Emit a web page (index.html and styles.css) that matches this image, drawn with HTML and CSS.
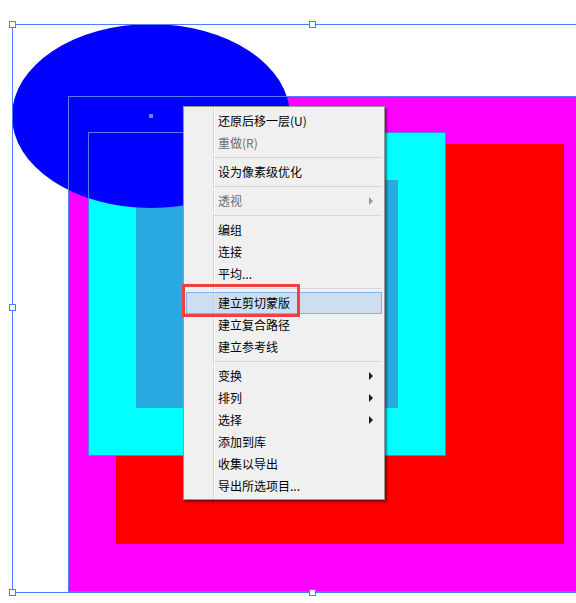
FILE: index.html
```html
<!DOCTYPE html>
<html lang="zh-CN">
<head>
<meta charset="utf-8">
<title>Context menu</title>
<link rel="stylesheet" href="styles.css">
</head>
<body>
<div class="canvas">
  <svg class="art" width="576" height="603" viewBox="0 0 576 603" shape-rendering="crispEdges">
    <rect x="68" y="96" width="520" height="496" fill="#ff00ff"/>
    <rect x="116" y="144" width="448" height="400" fill="#ff0000"/>
    <rect x="88" y="132" width="358" height="324" fill="#00ffff"/>
    <rect x="136" y="180" width="262" height="228" fill="#29abe2"/>
    <ellipse cx="151" cy="116" rx="139" ry="92" fill="#0000ff" shape-rendering="auto"/>
    <rect x="68.5" y="96.5" width="520" height="495" fill="none" stroke="#4d7cfe" stroke-width="1"/>
    <rect x="88.5" y="132.5" width="357" height="323" fill="none" stroke="#4d7cfe" stroke-width="1"/>
    <rect x="12.5" y="24.5" width="600" height="568" fill="none" stroke="#4d7cfe" stroke-width="1"/>
    <rect x="149" y="114" width="4" height="4" fill="#5b86ff"/>
    <g fill="#ffffff" stroke="#4d7cfe" stroke-width="1">
      <rect x="9.5" y="21.5" width="6" height="6"/>
      <rect x="309.5" y="21.5" width="6" height="6"/>
      <rect x="9.5" y="304.5" width="6" height="6"/>
      <rect x="9.5" y="589.5" width="6" height="6"/>
      <rect x="309.5" y="589.5" width="6" height="6"/>
    </g>
  </svg>

  <div class="menu">
    <div class="item">还原后移一层(U)</div>
    <div class="item disabled">重做(R)</div>
    <div class="sep"></div>
    <div class="item">设为像素级优化</div>
    <div class="sep"></div>
    <div class="item disabled"><span>透视</span><span class="arrow"></span></div>
    <div class="sep"></div>
    <div class="item">编组</div>
    <div class="item">连接</div>
    <div class="item">平均...</div>
    <div class="sep"></div>
    <div class="item active">建立剪切蒙版</div>
    <div class="item">建立复合路径</div>
    <div class="item">建立参考线</div>
    <div class="sep"></div>
    <div class="item"><span>变换</span><span class="arrow"></span></div>
    <div class="item"><span>排列</span><span class="arrow"></span></div>
    <div class="item"><span>选择</span><span class="arrow"></span></div>
    <div class="item">添加到库</div>
    <div class="item">收集以导出</div>
    <div class="item">导出所选项目...</div>
  </div>

  <div class="annotation"></div>
</div>
</body>
</html>
```

FILE: styles.css
```css
html, body {
  margin: 0;
  padding: 0;
  background: #ffffff;
}

.canvas {
  position: relative;
  width: 576px;
  height: 603px;
  overflow: hidden;
  font-family: "Noto Sans CJK SC", "Noto Sans", sans-serif;
}

.art {
  display: block;
}

.menu {
  position: absolute;
  left: 183px;
  top: 106px;
  width: 200px;
  box-sizing: content-box;
  padding: 3px 0 2px 0;
  border: 1px solid #979797;
  background-color: #f0f0f0;
  background-image: linear-gradient(to right,
    transparent 29px, #d9d9d9 29px, #d9d9d9 30px,
    #ffffff 30px, #ffffff 31px, transparent 31px);
  box-shadow: 2px 2px 2px rgba(0, 0, 0, 0.45);
  display: flex;
  flex-direction: column;
}

.item {
  height: 22px;
  margin: 0 2px;
  padding: 0 9px 0 32px;
  box-sizing: border-box;
  display: flex;
  align-items: center;
  justify-content: space-between;
  font-size: 12px;
  line-height: 22px;
  color: #000000;
  white-space: nowrap;
}

.item.disabled {
  color: #6d6d6d;
}

.item.active {
  background: rgba(160, 200, 240, 0.45);
  border: 1px solid #84b0e8;
  padding-left: 31px;
  padding-right: 8px;
}

.sep {
  height: 1px;
  margin: 3px 2px 3px 29px;
  background: #d7d7d7;
}

.arrow {
  width: 0;
  height: 0;
  border-top: 4px solid transparent;
  border-bottom: 4px solid transparent;
  border-left: 4px solid #1a1a1a;
}

.item.disabled .arrow {
  border-left-color: #9a9a9a;
}

.annotation {
  position: absolute;
  left: 182px;
  top: 284px;
  width: 118px;
  height: 33px;
  box-sizing: border-box;
  border: 3px solid #f04040;
}
```
